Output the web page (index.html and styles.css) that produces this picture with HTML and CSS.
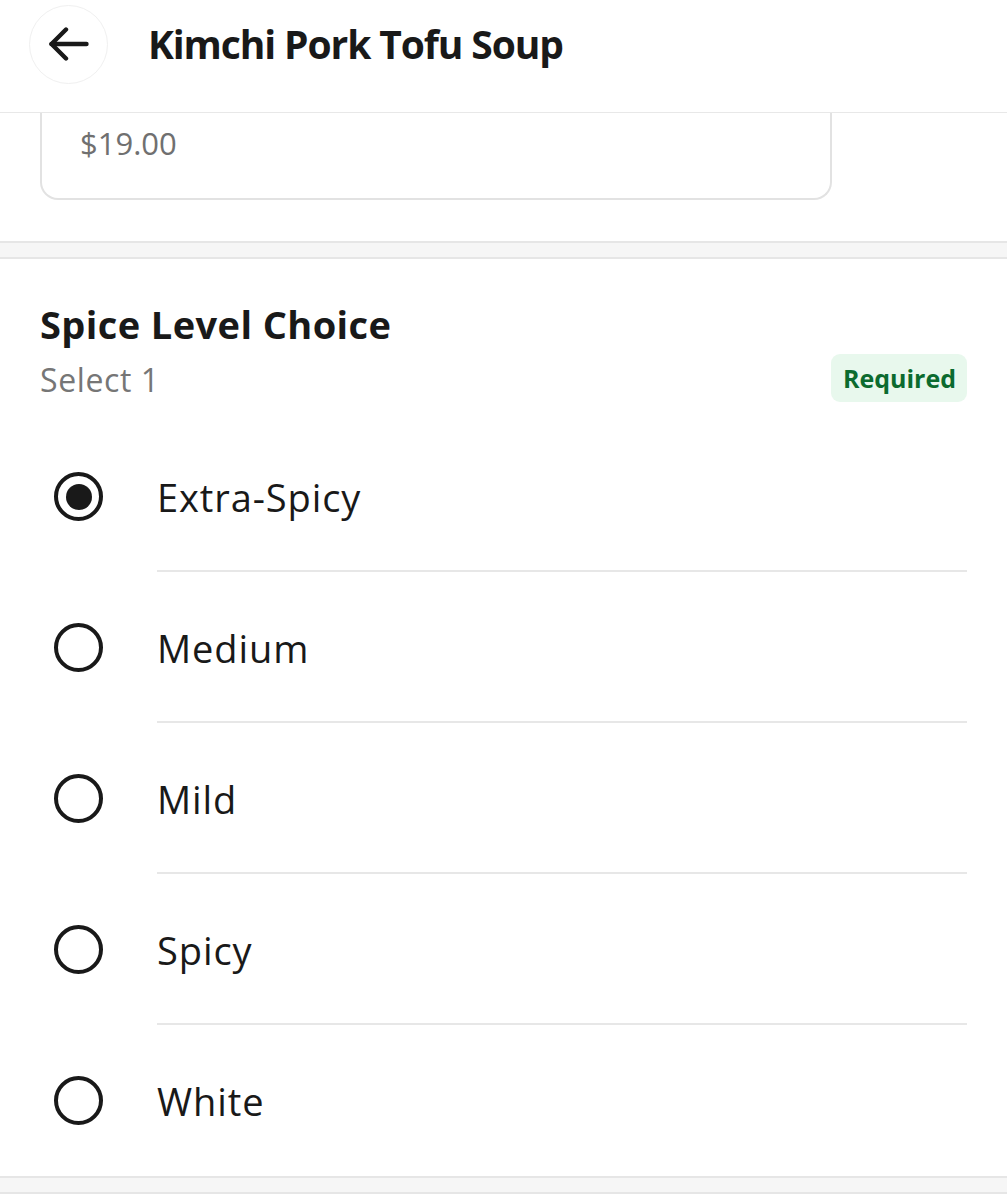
FILE: index.html
```html
<!DOCTYPE html>
<html>
	<head>
		<title>Kimchi Pork Tofu Soup</title>
		<link rel="stylesheet" href="styles.css">
	</head>
	<body>
		<header class="topbar">
			<button class="back" type="button" aria-label="Back">
				<svg width="40" height="34" viewBox="0 0 40 34" fill="none" stroke="#191919" stroke-width="4.4" stroke-linecap="round" stroke-linejoin="round">
					<path d="M2.5 17H37.5"/>
					<path d="M17 2.5L2.5 17L17 31.5"/>
				</svg>
			</button>
			<h1>Kimchi Pork Tofu Soup</h1>
		</header>

		<div class="price-wrap">
			<div class="price-card">$19.00</div>
		</div>

		<div class="band"></div>

		<form class="options">
			<div class="options-head">
				<div>
					<h2>Spice Level Choice</h2>
					<p class="hint">Select 1</p>
				</div>
				<span class="badge">Required</span>
			</div>
			<label class="option"><input type="radio" name="spice" checked><span class="mark"></span><span class="name">Extra-Spicy</span></label>
			<label class="option"><input type="radio" name="spice"><span class="mark"></span><span class="name">Medium</span></label>
			<label class="option"><input type="radio" name="spice"><span class="mark"></span><span class="name">Mild</span></label>
			<label class="option"><input type="radio" name="spice"><span class="mark"></span><span class="name">Spicy</span></label>
			<label class="option"><input type="radio" name="spice"><span class="mark"></span><span class="name">White</span></label>
		</form>

		<div class="band"></div>
	</body>
</html>
```

FILE: styles.css
```css
body {
	margin: 0;
	background: #FFFFFF;
	color: #191919;
	font-family: "Open Sans", "Noto Sans", sans-serif;
}

.topbar {
	display: flex;
	align-items: center;
	height: 113px;
	border-bottom: 1px solid #E8E8E8;
	box-sizing: border-box;
	padding: 0 0 24px 29px;
}
.back {
	width: 79px;
	height: 79px;
	border-radius: 50%;
	border: 1px solid #F0F0F0;
	background: #FFFFFF;
	display: flex;
	align-items: center;
	justify-content: center;
	padding: 0;
	flex-shrink: 0;
}
.topbar h1 {
	margin: 0 0 0 40px;
	font-size: 39px;
	font-weight: 700;
	line-height: 48px;
	letter-spacing: -1.1px;
}

.price-wrap {
	padding: 0 175px 41px 40px;
}
.price-card {
	border: 2px solid #E2E2E2;
	border-top: none;
	border-radius: 0 0 18px 18px;
	height: 87px;
	box-sizing: border-box;
	padding: 9px 0 0 38px;
	font-size: 31px;
	color: #707070;
}

.band {
	height: 14px;
	background: #F6F6F6;
	border-top: 2px solid #E6E6E6;
	border-bottom: 2px solid #E6E6E6;
}

.options {
	padding: 0 40px;
}
.options-head {
	display: flex;
	justify-content: space-between;
	align-items: flex-end;
	height: 162px;
	box-sizing: border-box;
	padding: 43px 0 21px;
}
.options-head h2 {
	margin: 0;
	font-size: 38px;
	font-weight: 700;
	line-height: 44px;
	letter-spacing: 0.4px;
}
.hint {
	margin: 14px 0 0;
	font-size: 32px;
	color: #767676;
	line-height: 40px;
	letter-spacing: 0.6px;
}
.badge {
	margin-bottom: -2px;
	background: #E8F8ED;
	color: #0B6B2F;
	font-weight: 700;
	font-size: 25px;
	line-height: 48px;
	padding: 0 11px 0 12px;
	border-radius: 9px;
}

.option {
	display: flex;
	align-items: center;
	height: 151px;
	position: relative;
}
.option input {
	display: none;
}
.option:not(:last-child):after {
	content: "";
	position: absolute;
	left: 117px;
	right: 0;
	bottom: 0;
	border-bottom: 2px solid #E7E7E7;
}
.mark {
	width: 49px;
	height: 49px;
	box-sizing: border-box;
	border: 4.5px solid #191919;
	border-radius: 50%;
	margin: 0 54px 0 14px;
	display: flex;
	align-items: center;
	justify-content: center;
	flex-shrink: 0;
}
.option input:checked + .mark:before {
	content: "";
	width: 26px;
	height: 26px;
	border-radius: 50%;
	background: #191919;
}
.name {
	font-size: 38px;
	letter-spacing: 0.9px;
}
```
